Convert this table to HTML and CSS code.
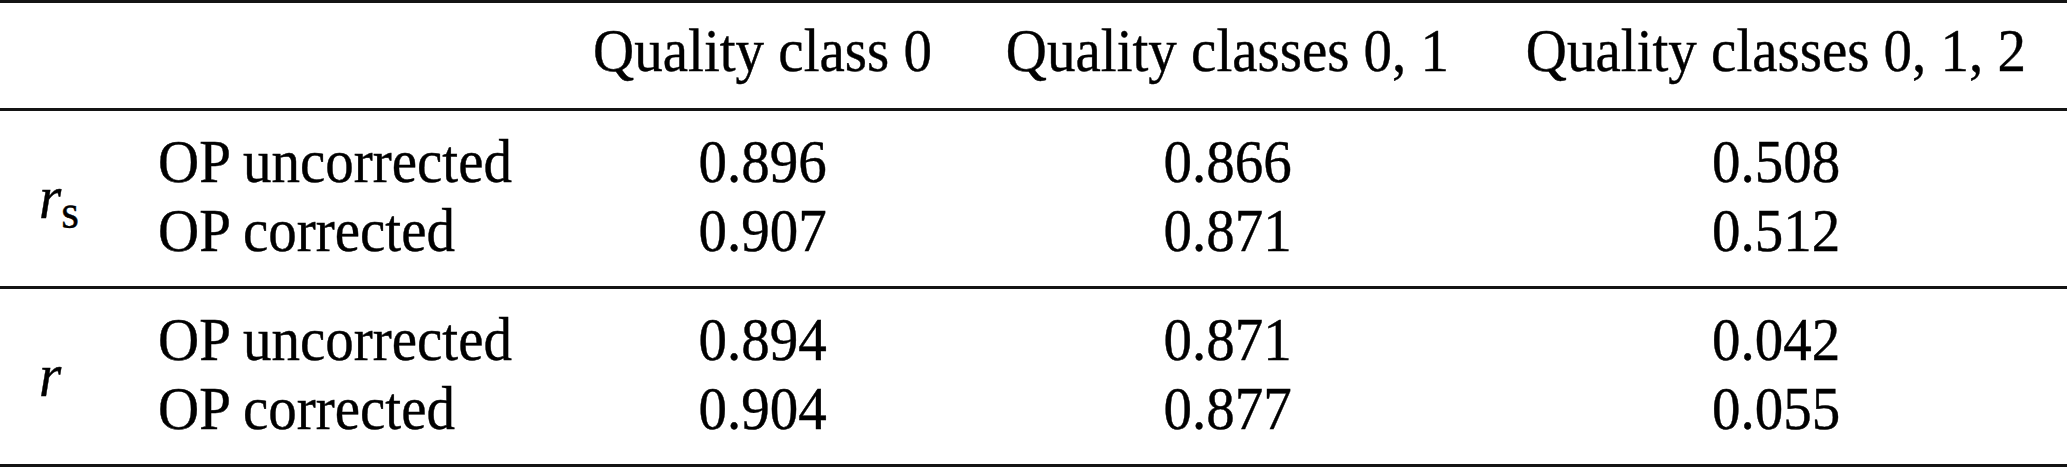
FILE: index.html
```html
<!DOCTYPE html>
<html lang="en">
<head>
<meta charset="utf-8">
<title>Correlation table</title>
<link rel="stylesheet" href="styles.css">
</head>
<body>
<table class="results">
  <colgroup>
    <col class="c-sym">
    <col class="c-label">
    <col class="c-q0">
    <col class="c-q01">
    <col class="c-q012">
  </colgroup>
  <thead>
    <tr>
      <th></th>
      <th></th>
      <th class="num"><span class="t">Quality class 0</span></th>
      <th class="num"><span class="t">Quality classes 0, 1</span></th>
      <th class="num"><span class="t">Quality classes 0, 1, 2</span></th>
    </tr>
  </thead>
  <tbody>
    <tr class="first">
      <td class="sym" rowspan="2"><span class="t"><i>r</i><sub>s</sub></span></td>
      <td class="label"><span class="t">OP uncorrected</span></td>
      <td class="num"><span class="t">0.896</span></td>
      <td class="num"><span class="t">0.866</span></td>
      <td class="num"><span class="t">0.508</span></td>
    </tr>
    <tr class="last">
      <td class="label"><span class="t">OP corrected</span></td>
      <td class="num"><span class="t">0.907</span></td>
      <td class="num"><span class="t">0.871</span></td>
      <td class="num"><span class="t">0.512</span></td>
    </tr>
  </tbody>
  <tbody>
    <tr class="first">
      <td class="sym" rowspan="2"><span class="t"><i>r</i></span></td>
      <td class="label"><span class="t">OP uncorrected</span></td>
      <td class="num"><span class="t">0.894</span></td>
      <td class="num"><span class="t">0.871</span></td>
      <td class="num"><span class="t">0.042</span></td>
    </tr>
    <tr class="last">
      <td class="label"><span class="t">OP corrected</span></td>
      <td class="num"><span class="t">0.904</span></td>
      <td class="num"><span class="t">0.877</span></td>
      <td class="num"><span class="t">0.055</span></td>
    </tr>
  </tbody>
</table>
</body>
</html>
```
FILE: styles.css
```css
html, body {
  margin: 0;
  padding: 0;
  background: #ffffff;
}

.results {
  width: 2067px;
  table-layout: fixed;
  border-collapse: collapse;
  border-top: 3px solid #141414;
  border-bottom: 3px solid #141414;
  font-family: "Liberation Serif", "Times New Roman", serif;
  font-size: 57px;
  color: #000;
}

.results thead {
  line-height: 71px;
}

.results tbody {
  line-height: 69px;
}

.c-sym { width: 120px; }
.c-label { width: 435px; }
.c-q0 { width: 415px; }
.c-q01 { width: 515px; }
.c-q012 { width: 582px; }

.results th,
.results td {
  padding: 0;
  font-weight: normal;
  white-space: nowrap;
}

.t {
  display: inline-block;
  transform: scaleY(1.07);
  -webkit-text-stroke: 0.4px #000;
}

.results thead th {
  padding-top: 12px;
  padding-bottom: 22px;
  border-bottom: 3px solid #141414;
}

.results tbody + tbody {
  border-top: 3px solid #141414;
}

.results tr.first td {
  padding-top: 16px;
}

.results tr.last td {
  padding-bottom: 21px;
}

.num {
  text-align: center;
}

.results td.label {
  text-align: left;
  padding-left: 38px;
}

.results td.sym {
  text-align: left;
  vertical-align: middle;
  padding-left: 39px;
  padding-top: 0;
  padding-bottom: 19px;
}

.sym i {
  font-style: italic;
}

.sym sub {
  font-size: 0.8em;
  vertical-align: -9px;
  line-height: 0;
}
```
